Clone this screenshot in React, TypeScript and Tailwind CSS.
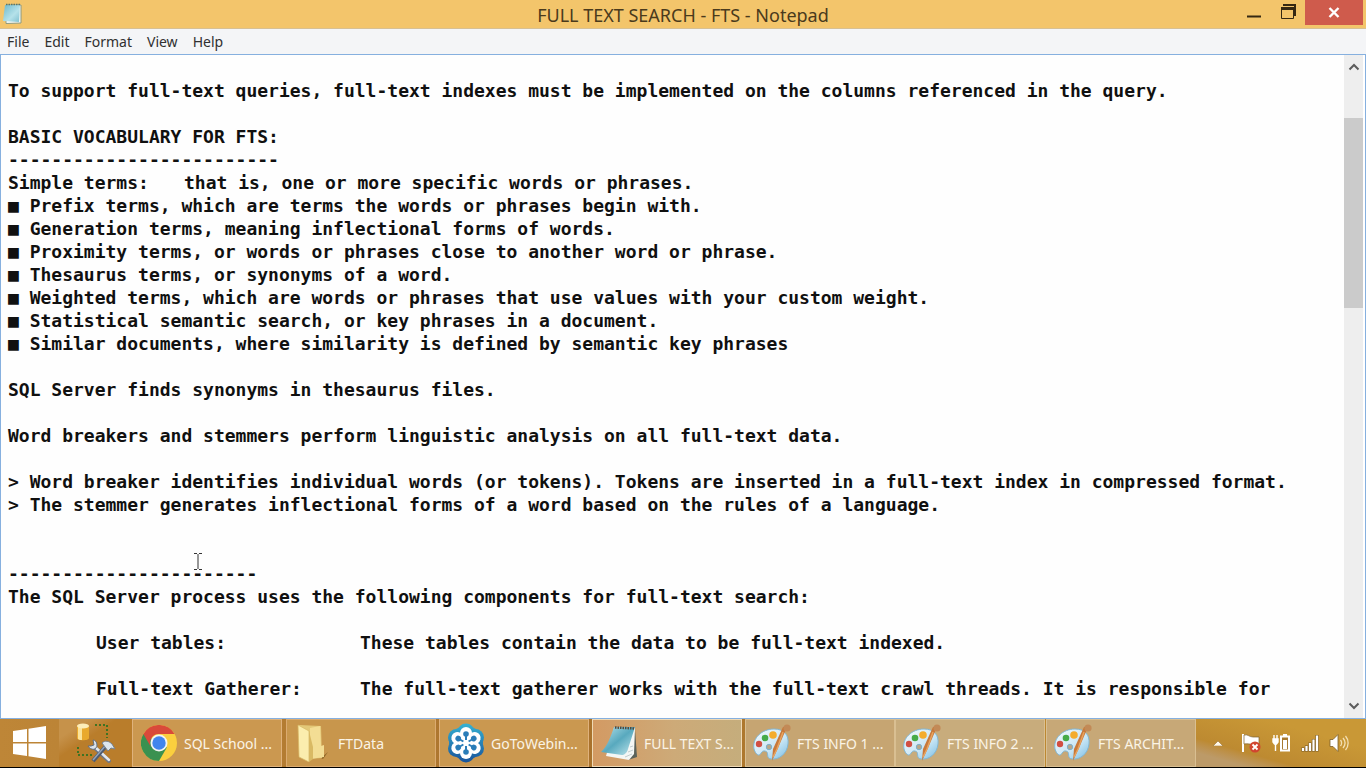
import { useState } from "react";
import type { ReactNode } from "react";

const noteText = [
  "",
  "To support full-text queries, full-text indexes must be implemented on the columns referenced in the query.",
  "",
  "BASIC VOCABULARY FOR FTS:",
  "-------------------------",
  "Simple terms:\tthat is, one or more specific words or phrases.",
  "■ Prefix terms, which are terms the words or phrases begin with.",
  "■ Generation terms, meaning inflectional forms of words.",
  "■ Proximity terms, or words or phrases close to another word or phrase.",
  "■ Thesaurus terms, or synonyms of a word.",
  "■ Weighted terms, which are words or phrases that use values with your custom weight.",
  "■ Statistical semantic search, or key phrases in a document.",
  "■ Similar documents, where similarity is defined by semantic key phrases",
  "",
  "SQL Server finds synonyms in thesaurus files.",
  "",
  "Word breakers and stemmers perform linguistic analysis on all full-text data.",
  "",
  "> Word breaker identifies individual words (or tokens). Tokens are inserted in a full-text index in compressed format.",
  "> The stemmer generates inflectional forms of a word based on the rules of a language.",
  "",
  "",
  "-----------------------",
  "The SQL Server process uses the following components for full-text search:",
  "",
  "\tUser tables:\t\tThese tables contain the data to be full-text indexed.",
  "",
  "\tFull-text Gatherer:\tThe full-text gatherer works with the full-text crawl threads. It is responsible for",
].join("\n");

function NotepadSmallIcon() {
  return (
    <svg width="22" height="22" viewBox="0 0 22 22" aria-hidden="true">
      <defs>
        <linearGradient id="padSmall" x1="0" y1="0" x2="1" y2="1">
          <stop offset="0" stopColor="#6fb9cb" />
          <stop offset="0.6" stopColor="#b5e2ea" />
          <stop offset="1" stopColor="#7fc0d0" />
        </linearGradient>
      </defs>
      <path d="M5 2h15v18l-15 .5z" fill="#f5f8f4" stroke="#8c9a80" strokeWidth="1" />
      <path d="M4 2h15l-1 17L2 18z" fill="url(#padSmall)" />
      <path d="M5 1.500h14" stroke="#56766f" strokeWidth="1.500" strokeDasharray="1.500 1" />
    </svg>
  );
}

function NotepadIcon() {
  return (
    <svg width="38" height="38" viewBox="0 0 38 38" aria-hidden="true">
      <defs>
        <linearGradient id="padBig" x1="0" y1="0" x2="1" y2="1">
          <stop offset="0" stopColor="#b9e4ec" />
          <stop offset="0.5" stopColor="#58a9be" />
          <stop offset="1" stopColor="#c3e8ee" />
        </linearGradient>
      </defs>
      <path d="M35 5l2 28-9 3z" fill="#5b6259" />
      <path d="M14 4h21l-1 26-5 6L6 32z" fill="#f4f7f5" />
      <path d="M14 3h21l-7 22c-1 4-4 6-6 6L1 28C7 23 11 12 14 3z" fill="url(#padBig)" />
      <path d="M15 3.500l20 1" stroke="#51483d" strokeWidth="2.500" strokeDasharray="1.500 1" />
      <path d="M25 33l7-3M28 28l5-2M30 23l3-1" stroke="#b4c2c4" strokeWidth=".8" />
    </svg>
  );
}

function SqlToolsIcon() {
  return (
    <svg width="42" height="42" viewBox="0 0 42 42" aria-hidden="true">
      <path d="M20 3h12v13M3 25v8h14" fill="none" stroke="#3f7323" strokeWidth="2" strokeDasharray="2 2" />
      <path d="M2 4v12c0 3 12 3 12 0V4z" fill="#e9a92d" />
      <path d="M3 5v12c1 1 3 1 4 1V5z" fill="#fbe39a" />
      <ellipse cx="8" cy="4" rx="6" ry="2.500" fill="#fdedb8" />
      <path d="M34 39L19 25" stroke="#6d7684" strokeWidth="4" strokeLinecap="round" />
      <path d="M34 38L19 24" stroke="#e3e9ef" strokeWidth="2.500" strokeLinecap="round" />
      <path d="M13 24c3 5 9 4 9-1 0-3-2-5-4-5l1 5-3 1z" fill="#dbe3ec" stroke="#66707f" />
      <path d="M18 39l13-15" stroke="#4e5b70" strokeWidth="4" />
      <path d="M18 38l13-15" stroke="#91a3b9" strokeWidth="1.500" />
      <path d="M27 21c3-3 7-2 10 1l3 5-4-1-3 3z" fill="#dce6ee" stroke="#77828e" />
    </svg>
  );
}

function ChromeIcon() {
  return (
    <svg width="36" height="36" viewBox="0 0 36 36" aria-hidden="true">
      <circle cx="18" cy="18" r="18" fill="#fbcf3e" />
      <path d="M2.400 9A18 18 0 0 0 18 36l7.800-13.500L18 18z" fill="#3a9150" />
      <path d="M2.400 9A18 18 0 0 1 33.600 9H18a9 9 0 0 0-7.800 13.500z" fill="#d94a3a" />
      <circle cx="18" cy="18" r="8.500" fill="#f4f5f3" />
      <circle cx="18" cy="18" r="6.700" fill="#4285ed" />
    </svg>
  );
}

function FolderIcon() {
  return (
    <svg width="34" height="38" viewBox="0 0 34 38" aria-hidden="true">
      <path d="M25 34l7-6-5 7z" fill="#8e6526" />
      <path d="M3 1l22 1 1 32-14 1L3 32z" fill="#e3c878" />
      <path d="M14 4l10-2 1 20 3-1v12l-14 2z" fill="#f3dd94" />
      <path d="M2 1l11 6v31L3 33z" fill="#fbedae" stroke="#d7b965" strokeWidth=".7" />
      <path d="M13 7l4 16v12l-4 3z" fill="#d9b964" />
    </svg>
  );
}

function WebinarIcon() {
  const angles = [0, 60, 120, 180, 240, 300];
  return (
    <svg width="38" height="40" viewBox="0 0 38 40" aria-hidden="true">
      <defs>
        <linearGradient id="webinar" gradientUnits="userSpaceOnUse" x1="0" y1="0" x2="0" y2="40">
          <stop offset="0" stopColor="#35b3d3" />
          <stop offset="1" stopColor="#18529a" />
        </linearGradient>
      </defs>
      <g fill="url(#webinar)">
        <circle cx="19" cy="20" r="17" />
        <circle cx="19" cy="9" r="8.500" />
        <circle cx="19" cy="31" r="8.500" />
        <circle cx="9.500" cy="14.500" r="8.500" />
        <circle cx="28.500" cy="14.500" r="8.500" />
        <circle cx="9.500" cy="25.500" r="8.500" />
        <circle cx="28.500" cy="25.500" r="8.500" />
      </g>
      {angles.map((a) => (
        <circle key={a} cx="19" cy="10" r="6" fill="#fff" transform={`rotate(${a} 19 20)`} />
      ))}
      <circle cx="19" cy="20" r="8" fill="#fff" />
      {angles.map((a) => (
        <g key={a} transform={`rotate(${a} 19 20)`}>
          <circle cx="19" cy="11" r="2.800" fill="#2a7db8" />
          <path d="M19 11v6" stroke="#2a7db8" strokeWidth="2" />
        </g>
      ))}
      <circle cx="19" cy="20" r="2.500" fill="#fff" />
    </svg>
  );
}

function PaintIcon() {
  return (
    <svg width="40" height="38" viewBox="0 0 40 38" aria-hidden="true">
      <defs>
        <linearGradient id="palette" x1="0" y1="0" x2="1" y2="1">
          <stop offset="0" stopColor="#f4fafd" />
          <stop offset="0.6" stopColor="#c9e6f5" />
          <stop offset="1" stopColor="#79bde4" />
        </linearGradient>
      </defs>
      <path
        d="M2 25C0 14 10 5 22 5c10 0 15 6 14 15-1 10-9 16-17 15-6-1-1-7-6-8-4-1-4 5-7 4-2-1-3-3-4-6z"
        fill="url(#palette)"
        stroke="#83b7d4"
        strokeWidth="1"
      />
      <circle cx="17" cy="23" r="2.700" fill="#b9a789" stroke="#7db1cc" />
      <circle cx="7" cy="20" r="3.200" fill="#d14f43" />
      <circle cx="13" cy="14" r="3.300" fill="#46ab49" />
      <circle cx="21" cy="11" r="3.800" fill="#f4ac2c" />
      <path d="M35 3L26 24l-6 13 1-12L31 3z" fill="#c8793a" />
      <path d="M31 8l-6 17-4 8" fill="none" stroke="#e8a35f" strokeWidth="1.500" />
      <circle cx="35" cy="4" r="3.600" fill="#c28a57" />
    </svg>
  );
}

type Task = { label: string; icon: ReactNode; look: string };

const tasks: Task[] = [
  { label: "SQL School ...", icon: <ChromeIcon />, look: "mr-1 border-[#dfb27c] bg-[#cb9850]" },
  { label: "FTData", icon: <FolderIcon />, look: "mr-[3px] border-[#dbab70] bg-[#c8964c]" },
  { label: "GoToWebin...", icon: <WebinarIcon />, look: "mr-[3px] border-[#dfb27c] bg-[#ca9850]" },
  { label: "FULL TEXT S...", icon: <NotepadIcon />, look: "mr-[3px] border-[#efd9b5] bg-linear-to-r from-[#d39a63] via-[#cdaa78] via-55% to-[#c5ad7c]" },
  { label: "FTS INFO 1 ...", icon: <PaintIcon />, look: "border-[#d9bf92] bg-[#c6a572]" },
  { label: "FTS INFO 2 ...", icon: <PaintIcon />, look: "mr-px border-[#d9bf92] bg-[#c8ac7c]" },
  { label: "FTS ARCHIT...", icon: <PaintIcon />, look: "border-[#d9bf92] bg-[#c7a877]" },
];

export default function App() {
  const [text, setText] = useState(noteText);

  return (
    <div className="flex h-screen flex-col overflow-hidden bg-black pb-px font-['Noto_Sans',sans-serif]">
      <header className="grid h-7 shrink-0 grid-cols-[1fr_auto_1fr] bg-[#f3c56b]">
        <div className="pt-[3px] pl-px">
          <NotepadSmallIcon />
        </div>
        <h1 className="text-[18px] leading-[30px] text-[#4a3a1c]">FULL TEXT SEARCH - FTS - Notepad</h1>
        <div className="flex justify-end">
          <button aria-label="Minimize" className="flex h-6 w-[34px] items-center justify-center">
            <svg width="16" height="20" viewBox="0 0 16 20" aria-hidden="true">
              <path d="M1 14.500h14" stroke="#352812" strokeWidth="2" />
            </svg>
          </button>
          <button aria-label="Restore" className="flex h-6 w-[34px] items-center justify-center">
            <svg width="16" height="16" viewBox="0 0 16 16" aria-hidden="true">
              <path d="M3 1h12v11" fill="none" stroke="#352812" strokeWidth="2" />
              <path d="M1.500 4v10.500h12V4" fill="none" stroke="#352812" />
              <path d="M1 4.500h13" stroke="#352812" strokeWidth="3" />
            </svg>
          </button>
          <button aria-label="Close" className="mr-[3px] flex h-[25px] w-[58px] items-center justify-center bg-[#cf5b4c]">
            <svg width="12" height="11" viewBox="0 0 12 11" aria-hidden="true">
              <path d="M1.500 1l9 9M10.500 1l-9 9" stroke="#fff" strokeWidth="2.400" />
            </svg>
          </button>
        </div>
      </header>

      <nav className="flex h-[26px] shrink-0 items-center gap-[15px] border-t border-[#d7c093] bg-[#f4f5f7] pl-[7px] text-[14px] text-[#303030]">
        <button>File</button>
        <button>Edit</button>
        <button>Format</button>
        <button>View</button>
        <button>Help</button>
      </nav>

      <main className="relative flex min-h-0 flex-1 border border-[#86b0df] bg-white">
        <textarea
          aria-label="Document text"
          spellCheck={false}
          wrap="off"
          value={text}
          onChange={(e) => setText(e.target.value)}
          className="min-w-0 flex-1 resize-none overflow-hidden bg-[#fefefe] pt-px pl-[7px] font-['DejaVu_Sans_Mono',monospace] text-[18px] leading-[23px] font-bold whitespace-pre text-[#101010] outline-none [tab-size:88px]"
        />
        <div className="flex w-[21px] shrink-0 flex-col border-r-2 border-white bg-[#eeeeee]">
          <button aria-label="Scroll up" className="flex h-[23px] items-center justify-center">
            <svg width="12" height="8" viewBox="0 0 12 8" aria-hidden="true">
              <path d="M1.500 6.500L6 2l4.500 4.500" fill="none" stroke="#5c5c5c" strokeWidth="2" />
            </svg>
          </button>
          <div className="flex flex-1 flex-col">
            <div className="grow-[40]" />
            <div className="grow-[190] bg-[#cbcbcb]" />
            <div className="grow-[385]" />
          </div>
          <button aria-label="Scroll down" className="flex h-6 items-center justify-center">
            <svg width="12" height="8" viewBox="0 0 12 8" aria-hidden="true">
              <path d="M1.500 1.500L6 6l4.500-4.500" fill="none" stroke="#5c5c5c" strokeWidth="2" />
            </svg>
          </button>
        </div>
        <svg className="pointer-events-none absolute top-[498px] left-[193px]" width="8" height="17" viewBox="0 0 8 17" aria-hidden="true">
          <path d="M0 .5h3M5 .5h3M4 1v15M0 16.500h3M5 16.500h3" stroke="#333" />
        </svg>
      </main>

      <footer className="flex h-12 shrink-0 items-stretch bg-linear-to-r from-[#be8637] via-[#a8712c] via-45% to-[#c99835]">
        <button aria-label="Start" className="flex w-[59px] shrink-0 items-center justify-center">
          <svg width="34" height="34" viewBox="0 0 34 34" aria-hidden="true">
            <path d="M0 5l14-2v13H0zM15.500 2.800L33 0v16H15.500zM0 17.500h14V30L0 28zM15.500 17.500H33V33l-17.500-2.800z" fill="#fff" />
          </svg>
        </button>
        <button aria-label="SQL Server Management Studio" className="flex w-[73px] shrink-0 items-center justify-center bg-linear-to-br from-[#c6924a] from-20% to-[#b97d2b] to-40%">
          <SqlToolsIcon />
        </button>
        <div className="flex">
          {tasks.map((task) => (
            <button
              key={task.label}
              className={`flex w-[150px] items-center border text-[14px] whitespace-nowrap text-[#fbf4e6] ${task.look}`}
            >
              <span className="flex w-[51px] shrink-0 items-center justify-center">{task.icon}</span>
              <span>{task.label}</span>
            </button>
          ))}
        </div>
        <div className="flex flex-1 items-center justify-end gap-[10px] bg-linear-to-tr from-[#bc9a68] from-15% via-[#bd8a31] via-30% to-[#c99836] to-70% pr-[17px]">
          <button aria-label="Show hidden icons" className="mr-2">
            <svg width="10" height="6" viewBox="0 0 10 6" aria-hidden="true">
              <path d="M0 6l5-5 5 5z" fill="#fff8e8" stroke="#896329" strokeWidth=".5" />
            </svg>
          </button>
          <button aria-label="Action Center">
            <svg width="20" height="22" viewBox="0 0 20 22" aria-hidden="true">
              <path d="M2 2v18" stroke="#fff" strokeWidth="2" />
              <path d="M3 3c4-1 5 2 9 2h6v8c-5 1-8-2-15-1z" fill="#fff" stroke="#7c602c" strokeWidth=".7" />
              <circle cx="14" cy="15" r="5.500" fill="#d1452f" />
              <path d="M11.500 12.500l5 5M16.500 12.500l-5 5" stroke="#fff" strokeWidth="1.800" />
            </svg>
          </button>
          <button aria-label="Battery">
            <svg width="20" height="22" viewBox="0 0 20 22" aria-hidden="true">
              <path d="M3 3v4M6 3v4M2 7h5v3l-1.500 2h-2L2 10zM4.500 12v7" fill="#fff" stroke="#fff" strokeWidth="1.400" />
              <path d="M10 4.500h8v14h-8z" fill="#a87a30" stroke="#fff" strokeWidth="2" />
              <path d="M12 8h4v9h-4z" fill="#fff" />
              <path d="M12 3h4" stroke="#fff" strokeWidth="2" />
            </svg>
          </button>
          <button aria-label="Network">
            <svg width="18" height="18" viewBox="0 0 18 18" aria-hidden="true">
              <path d="M2 17.500v-4M5.500 17.500v-6M9 17.500v-9M12.500 17.500V5M16 17.500V1" stroke="#785a26" strokeWidth="3.200" />
              <path d="M2 17v-3M5.500 17v-5M9 17V9M12.500 17V5.500M16 17V1.500" stroke="#fff" strokeWidth="2.200" />
            </svg>
          </button>
          <button aria-label="Volume">
            <svg width="20" height="20" viewBox="0 0 20 20" aria-hidden="true">
              <path d="M1 6.500h3l5-5v17l-5-5H1z" fill="#fff" stroke="#7c602c" strokeWidth=".8" />
              <path d="M11.500 7c1.500 2 1.500 4 0 6M14 5c2.500 3 2.500 7 0 10M16.500 3c3.500 4 3.500 10 0 14" fill="none" stroke="#f3dfb4" strokeWidth="1.300" />
            </svg>
          </button>
        </div>
      </footer>
    </div>
  );
}
